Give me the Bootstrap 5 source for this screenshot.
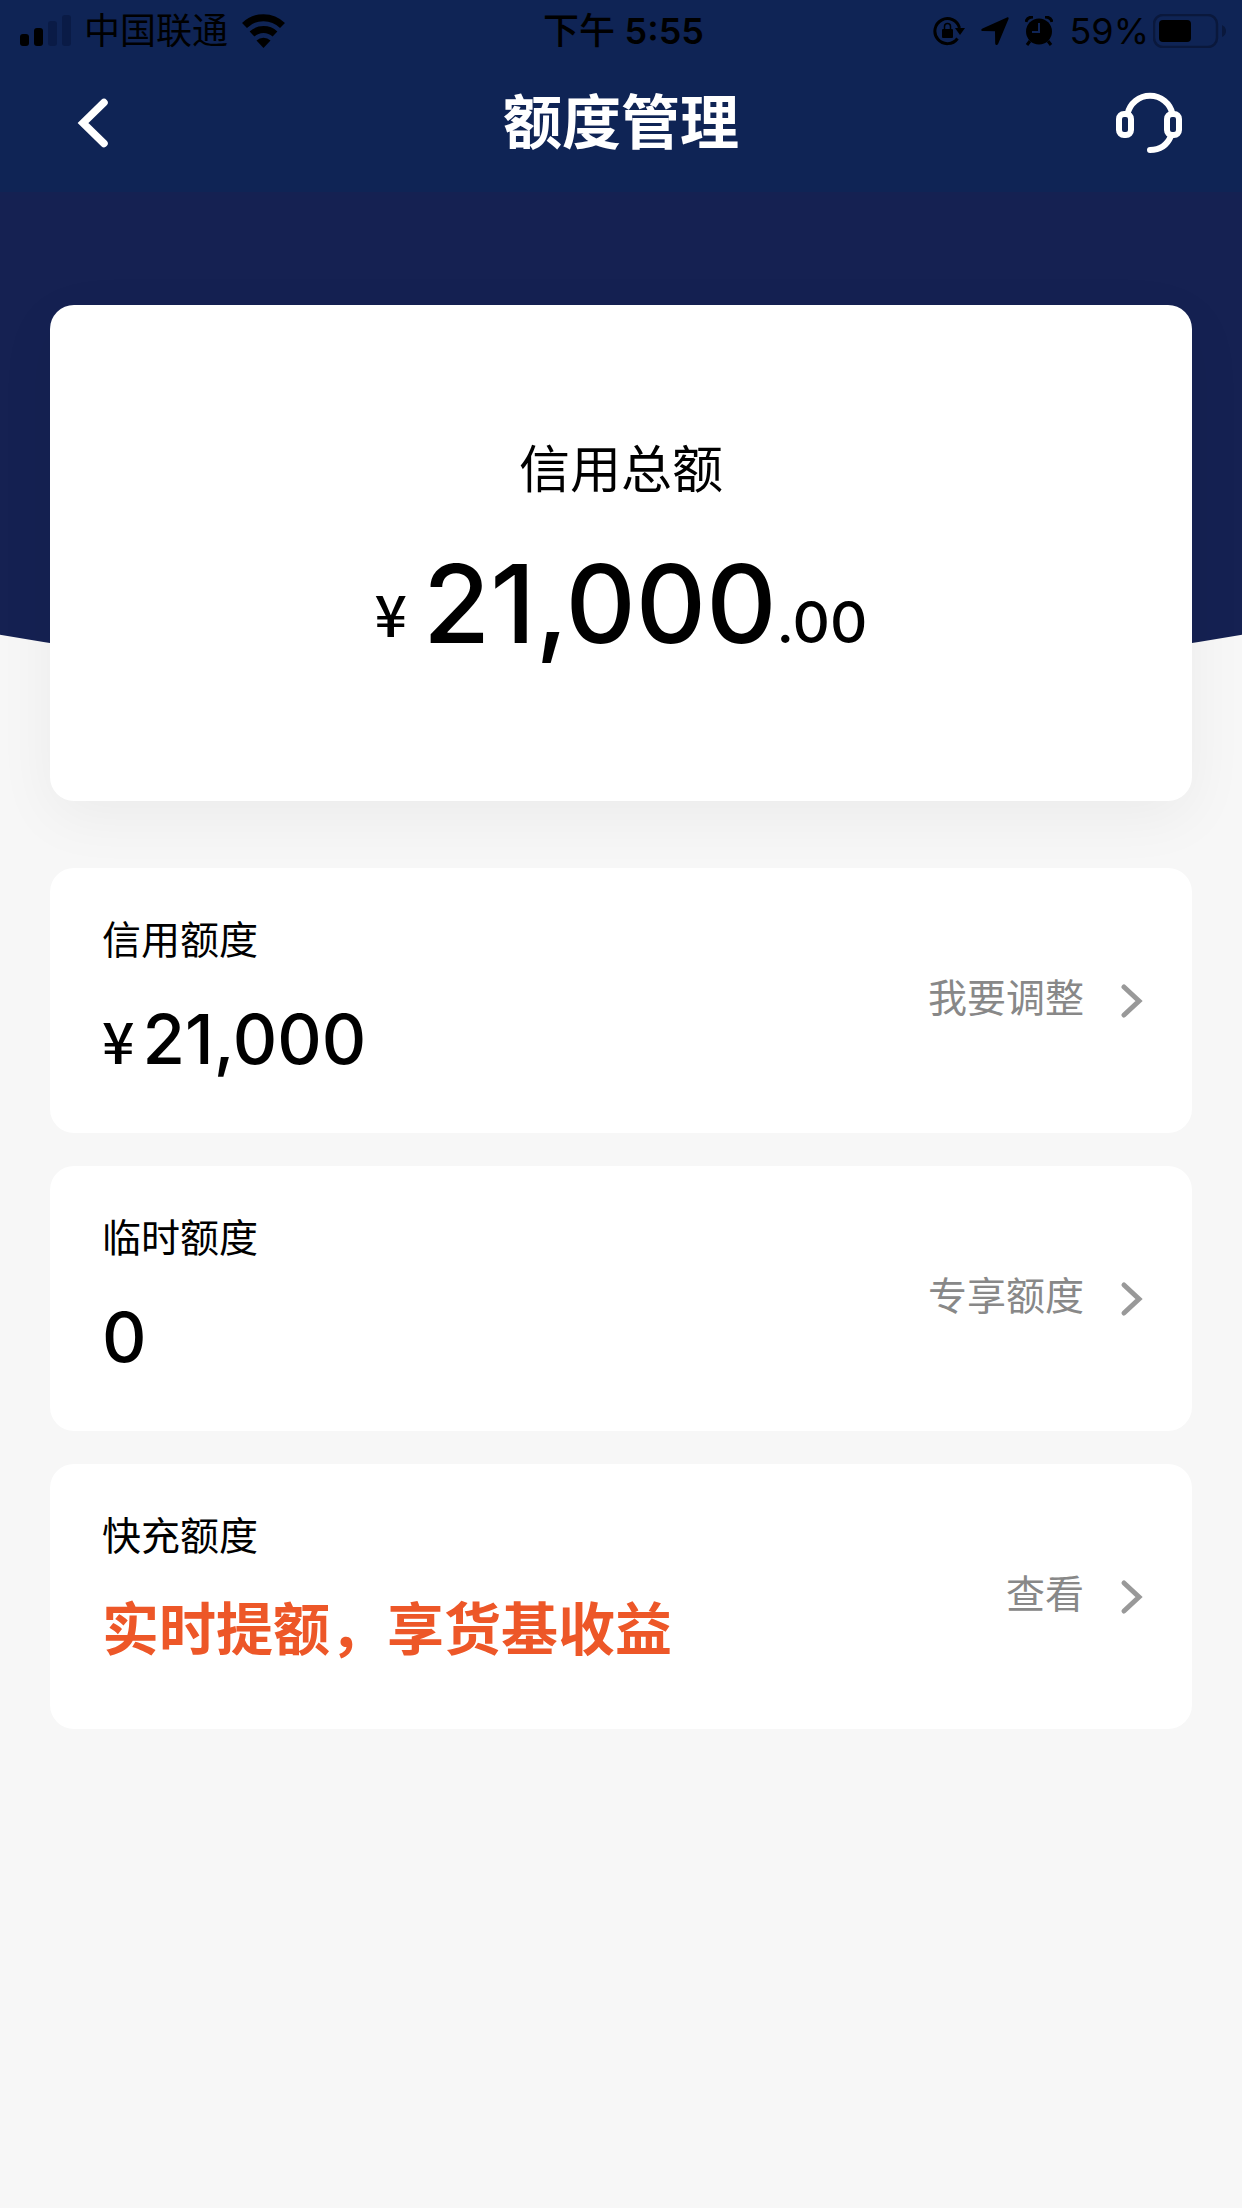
<!DOCTYPE html>
<html lang="zh-CN">
<head>
<meta charset="utf-8">
<meta name="viewport" content="width=device-width, initial-scale=1">
<title>额度管理</title>
<link href="https://cdn.jsdelivr.net/npm/bootstrap@5.3.0/dist/css/bootstrap.min.css" rel="stylesheet">
<style>
  body { background: #f7f7f7; color: #000; font-family: "Inter", "Noto Sans CJK SC", sans-serif; }
  .top-area { background: #0f2455; }
  .status-bar { height: 62px; padding: 0 15px 0 20px; font-size: 36px; line-height: 62px; }
  .status-bar svg, .title-bar svg, .limit-link svg { display: block; flex: none; }
  .status-side, .title-side { flex: 1 1 0; }
  .carrier { gap: 13px; }
  .title-bar { height: 130px; padding: 0 58px 8px; }
  .title-bar h1 { font-size: 59px; line-height: 84px; font-weight: 700; color: #fff; }
  .hero { position: relative; padding: 113px 50px 0; }
  .hero::before { content: ""; position: absolute; inset: 0 0 auto; height: 500px; background: #152152; clip-path: circle(3650px at 50% -3154px); }
  .total-card { position: relative; height: 496px; padding-top: 129px; border: 0; border-radius: 24px; box-shadow: 0 16px 60px rgba(0, 0, 0, .05); }
  .total-label { font-size: 51px; line-height: 72px; }
  .total-amount { margin-top: 29px; line-height: 136px; font-weight: 500; }
  .total-amount .yen { vertical-align: 6px; line-height: 1; }
  .whole-part { font-size: 109px; }
  .cents-part { font-size: 58px; }
  .yen { font-family: "Noto Sans CJK SC", sans-serif; font-size: 57px; font-weight: 500; }
  .limit-list { gap: 33px; padding: 67px 50px 0; }
  .limit-card { height: 265px; padding: 0 46px 0 52px; border: 0; border-radius: 24px; }
  .limit-info { padding-top: 44px; }
  .limit-label { font-size: 39px; line-height: 56px; }
  .limit-value { margin-top: 29px; font-size: 69px; line-height: 84px; font-weight: 500; }
  .limit-promo { margin-top: 24px; font-size: 57px; line-height: 84px; font-weight: 700; color: #ed5728; }
  .limit-link { gap: 36px; font-size: 39px; line-height: 56px; color: #888; text-decoration: none; }
  .limit-link span { padding-bottom: 6px; }
</style>
<script src="https://cdn.jsdelivr.net/npm/bootstrap@5.3.0/dist/js/bootstrap.bundle.min.js"></script>
</head>
<body>
<header class="top-area">
  <div class="status-bar d-flex align-items-center">
    <div class="status-side carrier d-flex align-items-center">
      <svg width="51" height="32" viewBox="0 0 51 32" aria-hidden="true">
        <rect x="0" y="19" width="9" height="12" rx="3"/><rect x="14" y="13" width="9" height="18" rx="3"/>
        <g fill="#0a1b46"><rect x="28" y="6" width="9" height="25" rx="3"/><rect x="42" y="0" width="9" height="31" rx="3"/></g>
      </svg>
      <span>中国联通</span>
      <svg width="45" height="34" viewBox="0 0 45 34" aria-hidden="true">
        <path d="M3.500 11.500a27 27 0 0 1 38 0M11 20a17 17 0 0 1 23 0" fill="none" stroke="#000" stroke-width="7"/>
        <path d="M15.500 26.500a10.500 10.500 0 0 1 14 0L22.500 34z"/>
      </svg>
    </div>
    <time class="fw-medium">下午 <span class="fw-semibold">5:55</span></time>
    <div class="status-side d-flex align-items-center justify-content-end">
      <svg width="32" height="30" viewBox="0 0 32 30" aria-hidden="true">
        <path d="M24.500 22.500A12.500 12.500 0 1 1 26.500 12" fill="none" stroke="#000" stroke-width="3"/>
        <path d="M22 12h10l-5 7z"/><rect x="9" y="13" width="11" height="9" rx="1"/>
        <path d="M11.500 14v-3.500a3 3 0 0 1 6 0V14" fill="none" stroke="#000" stroke-width="1.500"/>
      </svg>
      <svg class="ms-3" width="28" height="28" viewBox="0 0 28 28" aria-hidden="true"><path d="M26 .5 1.500 11.500c-2 1-1.500 2.500.5 2.500l12 .3.200 12c0 2 2 2.500 3 .5L27.500 2C28 .6 27.300 0 26 .5z"/></svg>
      <svg class="ms-3" width="28" height="30" viewBox="0 0 28 30" aria-hidden="true">
        <circle cx="14" cy="15.500" r="13"/><path d="M1 6Q2 1 8 1M27 6Q26 1 20 1M5 25l-3 4M23 25l3 4" fill="none" stroke="#000" stroke-width="3"/>
        <path d="M14 7v9H7" fill="none" stroke="#0f2455" stroke-width="2"/>
      </svg>
      <span class="ms-3 me-1">59%</span>
      <svg width="74" height="34" viewBox="0 0 74 34" aria-hidden="true">
        <rect x="1" y="1" width="63" height="32" rx="9" fill="none" stroke="#0a183c" stroke-width="2.500"/>
        <rect x="6" y="6" width="32" height="22" rx="4"/><path d="M69 11q4 2 4 6t-4 6z" fill="#0a183c"/>
      </svg>
    </div>
  </div>
  <nav class="title-bar d-flex align-items-center" aria-label="页面导航">
    <div class="title-side"><button type="button" class="btn p-0 border-0" aria-label="返回">
      <svg width="56" height="56" viewBox="-14 0 56 56"><path d="M32 7.500 11 28l21 20.500" fill="none" stroke="#fff" stroke-width="7.500" stroke-linecap="round"/></svg>
    </button></div>
    <h1 class="m-0">额度管理</h1>
    <div class="title-side d-flex justify-content-end"><button type="button" class="btn p-0 border-0" aria-label="客服">
      <svg width="70" height="64" viewBox="0 0 70 64"><g fill="none" stroke="#fff" stroke-width="6" stroke-linecap="round"><path d="M13.500 23a23 23 0 0 1 45 0M57 45Q51 59 36 59"/><rect x="5" y="23" width="12" height="21" rx="5"/><rect x="53" y="23" width="12" height="21" rx="5"/></g></svg>
    </button></div>
  </nav>
</header>
<main>
  <section class="hero">
    <div class="card total-card align-items-center">
      <div class="total-label">信用总额</div>
      <div class="total-amount"><span class="yen me-3">¥</span><span class="whole-part">21,000</span><span class="cents-part">.00</span></div>
    </div>
  </section>
  <section class="limit-list d-flex flex-column">
    <div class="card limit-card flex-row justify-content-between">
      <div class="limit-info"><div class="limit-label">信用额度</div><div class="limit-value"><span class="yen me-2">¥</span>21,000</div></div>
      <a href="#" class="limit-link d-flex align-items-center"><span>我要调整</span>
        <svg width="26" height="36" viewBox="0 0 26 36" aria-hidden="true"><path d="M4 4l15 14L4 32" fill="none" stroke="#999" stroke-width="5" stroke-linecap="round"/></svg></a>
    </div>
    <div class="card limit-card flex-row justify-content-between">
      <div class="limit-info"><div class="limit-label">临时额度</div><div class="limit-value">0</div></div>
      <a href="#" class="limit-link d-flex align-items-center"><span>专享额度</span>
        <svg width="26" height="36" viewBox="0 0 26 36" aria-hidden="true"><path d="M4 4l15 14L4 32" fill="none" stroke="#999" stroke-width="5" stroke-linecap="round"/></svg></a>
    </div>
    <div class="card limit-card flex-row justify-content-between">
      <div class="limit-info"><div class="limit-label">快充额度</div><div class="limit-promo">实时提额，享货基收益</div></div>
      <a href="#" class="limit-link d-flex align-items-center"><span>查看</span>
        <svg width="26" height="36" viewBox="0 0 26 36" aria-hidden="true"><path d="M4 4l15 14L4 32" fill="none" stroke="#999" stroke-width="5" stroke-linecap="round"/></svg></a>
    </div>
  </section>
</main>
</body>
</html>
